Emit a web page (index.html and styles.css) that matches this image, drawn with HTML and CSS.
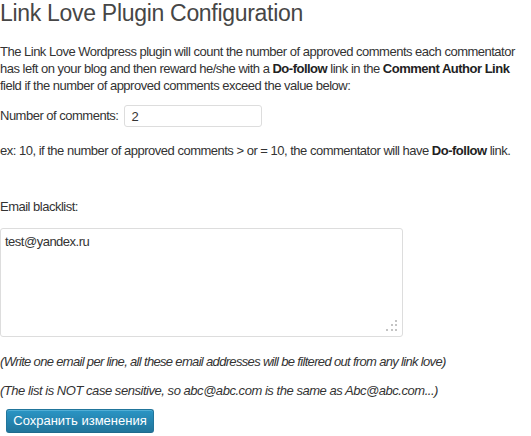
FILE: index.html
```html
<!DOCTYPE html>
<html>
<head>
<meta charset="utf-8">
<link rel="stylesheet" href="styles.css">
</head>
<body>
<div class="wrap">
  <h2 class="title">Link Love Plugin Configuration</h2>
  <p class="intro">The Link Love Wordpress plugin will count the number of approved comments each commentator has left on your blog and then reward he/she with a <strong>Do-follow</strong> link in the <strong>Comment Author Link</strong> field if the number of approved comments exceed the value below:</p>
  <div class="row">
    <label class="label" for="num">Number of comments:</label>
    <input class="num-input" id="num" type="text" value="2">
  </div>
  <p class="example">ex: 10, if the number of approved comments &gt; or = 10, the commentator will have <strong>Do-follow</strong> link.</p>
  <p class="bl-label">Email blacklist:</p>
  <div class="ta-wrap">
    <textarea class="blacklist">test@yandex.ru</textarea>
    <svg class="grip" width="12" height="12" viewBox="0 0 12 12">
      <rect x="9" y="0" width="2" height="2" fill="#c4c4c4"/>
      <rect x="5" y="4" width="2" height="2" fill="#c4c4c4"/>
      <rect x="9" y="4" width="2" height="2" fill="#c4c4c4"/>
      <rect x="0" y="9" width="2" height="2" fill="#c4c4c4"/>
      <rect x="5" y="9" width="2" height="2" fill="#c4c4c4"/>
      <rect x="9" y="9" width="2" height="2" fill="#c4c4c4"/>
    </svg>
  </div>
  <p class="note note1">(Write one email per line, all these email addresses will be filtered out from any link love)</p>
  <p class="note note2">(The list is NOT case sensitive, so abc@abc.com is the same as Abc@abc.com...)</p>
  <button class="btn" type="button">Сохранить изменения</button>
</div>
</body>
</html>
```

FILE: styles.css
```css
html, body {
  margin: 0;
  padding: 0;
  background: #fff;
}
body {
  font-family: "Liberation Sans", Arial, sans-serif;
  font-size: 13px;
  letter-spacing: -0.5px;
  line-height: 16px;
  color: #333;
}
.wrap {
  width: 531px;
}
.title {
  margin: 0;
  padding: 0;
  font-family: "Liberation Sans", Arial, sans-serif;
  font-weight: normal;
  font-size: 23px;
  letter-spacing: -0.3px;
  line-height: 26px;
  color: #464646;
}
.intro {
  margin: 17px 0 0 0;
  line-height: 17px;
}
strong {
  font-weight: bold;
  color: #222;
}
.row {
  display: flex;
  align-items: center;
  gap: 6px;
  margin-top: 11px;
}
.num-input {
  box-sizing: border-box;
  width: 138px;
  height: 22px;
  margin: 0;
  padding: 0 6px;
  border: 1px solid #ddd;
  border-radius: 3px;
  font-family: "Liberation Sans", Arial, sans-serif;
  font-size: 13px;
  color: #333;
  outline: none;
}
.example {
  margin: 16px 0 0 0;
}
.bl-label {
  margin: 40px 0 0 0;
}
.ta-wrap {
  position: relative;
  width: 403px;
  height: 109px;
  margin-top: 13px;
}
.blacklist {
  box-sizing: border-box;
  display: block;
  width: 403px;
  height: 109px;
  margin: 0;
  padding: 5px 4px;
  border: 1px solid #ddd;
  border-radius: 3px;
  font-family: "Liberation Sans", Arial, sans-serif;
  font-size: 13px;
  letter-spacing: -0.5px;
  line-height: 16px;
  color: #333;
  resize: none;
  outline: none;
}
.grip {
  position: absolute;
  right: 5px;
  bottom: 5px;
}
.note {
  margin: 0;
  font-style: italic;
}
.note1 {
  margin-top: 17px;
  letter-spacing: -0.67px;
}
.note2 {
  margin-top: 13px;
  letter-spacing: -0.46px;
}
.btn {
  display: block;
  box-sizing: border-box;
  width: 148px;
  height: 24px;
  margin: 10px 0 0 6px;
  padding: 0 6px;
  border: 1px solid #21759b;
  border-bottom-color: #1e6a8d;
  border-radius: 3px;
  background: linear-gradient(to bottom, #2a95c5, #21759b);
  box-shadow: inset 0 1px 0 rgba(120, 200, 230, 0.5);
  color: #fff;
  font-family: "Liberation Sans", Arial, sans-serif;
  font-size: 13px;
  letter-spacing: 0;
  line-height: 22px;
  text-align: center;
  white-space: nowrap;
  cursor: pointer;
}
```
